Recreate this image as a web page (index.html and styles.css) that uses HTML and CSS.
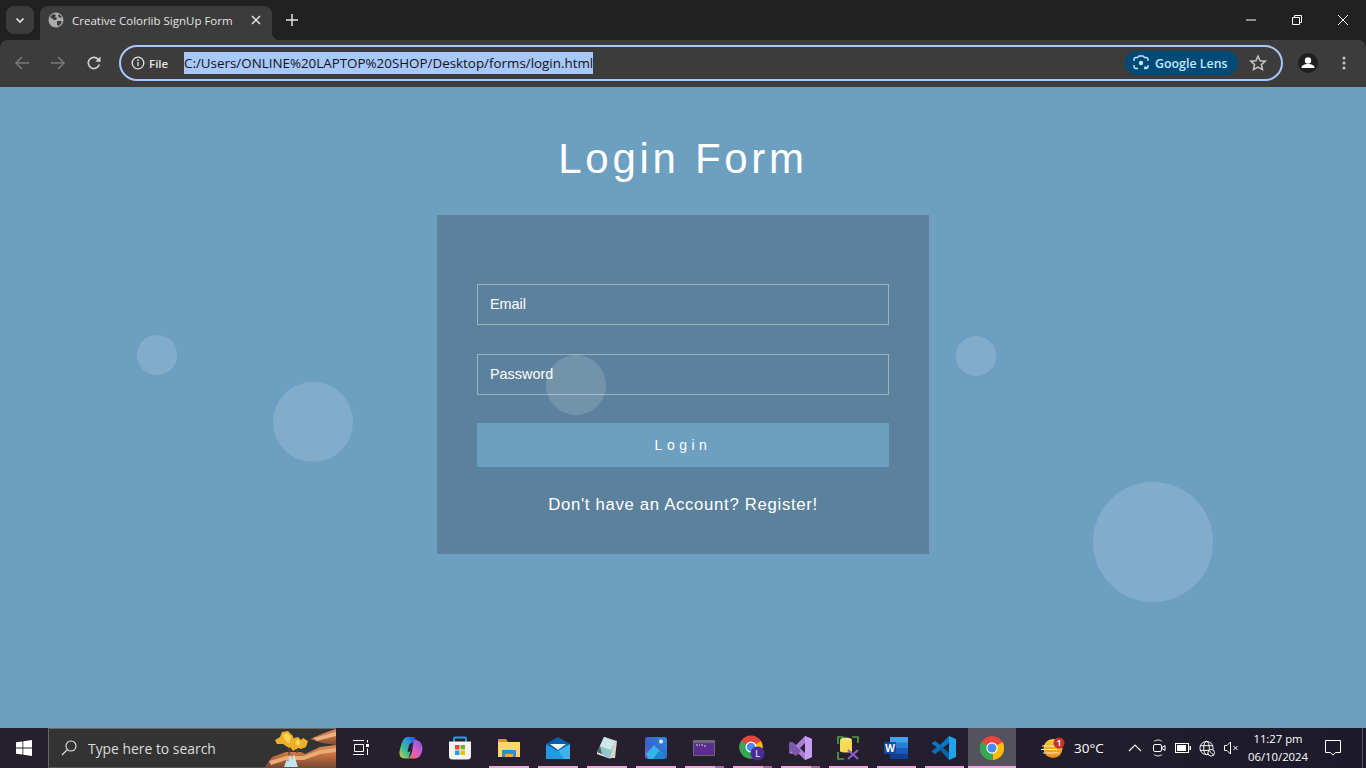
FILE: index.html
```html
<!DOCTYPE html>
<html lang="en">
<head>
    <meta charset="UTF-8">
    <title>Creative Colorlib SignUp Form</title>
    <link rel="stylesheet" href="styles.css">
</head>
<body>
    <!-- browser tabs -->
    <div class="tabstrip">
        <div class="tab-search">
            <svg width="12" height="12" viewBox="0 0 12 12"><path d="M2.5 4.5 6 8l3.5-3.5" fill="none" stroke="#e3e3e3" stroke-width="1.7"/></svg>
        </div>
        <div class="tab">
            <svg class="favicon" width="16" height="16" viewBox="0 0 16 16"><circle cx="8" cy="8" r="7.5" fill="#a9abad"/><path d="M2 5l3-3 3 1-1 2 2 1-1 2H6L3.500 6zM9 9h4l1 1-3 4-2-1zM11 2l3 3-2 1-2-2z" fill="#3c3c3c"/></svg>
            <span class="tab-title">Creative Colorlib SignUp Form</span>
            <svg class="tab-close" width="10" height="10" viewBox="0 0 10 10"><path d="M1 1l8 8M9 1 1 9" stroke="#e3e3e3" stroke-width="1.5"/></svg>
        </div>
        <svg class="new-tab" width="12" height="12" viewBox="0 0 12 12"><path d="M6 0v12M0 6h12" stroke="#e3e3e3" stroke-width="1.5"/></svg>
        <div class="window-controls">
            <svg width="10" height="10" viewBox="0 0 10 10"><path d="M0 5h10" stroke="#fff"/></svg>
            <svg width="10" height="10" viewBox="0 0 10 10"><path d="M.5 2.500h7v7h-7zM2.500 2.500V.5h7v7H7.500" fill="none" stroke="#fff"/></svg>
            <svg width="10" height="10" viewBox="0 0 10 10"><path d="M0 0l10 10M10 0 0 10" stroke="#fff"/></svg>
        </div>
    </div>

    <!-- address bar -->
    <div class="toolbar">
        <svg class="nav-icon" width="16" height="16" viewBox="0 0 16 16"><path d="M15 8H2M8 2 2 8l6 6" fill="none" stroke="#75787a" stroke-width="1.6"/></svg>
        <svg class="nav-icon" width="16" height="16" viewBox="0 0 16 16"><path d="M1 8h13M8 2l6 6-6 6" fill="none" stroke="#75787a" stroke-width="1.6"/></svg>
        <svg class="nav-icon" width="16" height="16" viewBox="0 0 16 16"><path d="M13.300 9.500a5.600 5.600 0 1 1-1.200-5.300L14 6" fill="none" stroke="#d0d2d4" stroke-width="1.600"/><path d="M14.500 1.500v5.200H9.300z" fill="#d0d2d4"/></svg>
        <div class="omnibox">
            <svg width="14" height="14" viewBox="0 0 14 14"><circle cx="7" cy="7" r="5.800" fill="none" stroke="#e3e3e3" stroke-width="1.300"/><path d="M7 6v4" stroke="#e3e3e3" stroke-width="1.300"/><circle cx="7" cy="4.200" r=".9" fill="#e3e3e3"/></svg>
            <span class="scheme">File</span>
            <span class="url">C:/Users/ONLINE%20LAPTOP%20SHOP/Desktop/forms/login.html</span>
            <div class="lens">
                <svg width="16" height="16" viewBox="0 0 16 16"><path d="M1 6V4.500A2 2 0 0 1 3 2.500h1.500L6 1h4l1.500 1.500H13a2 2 0 0 1 2 2V6M15 10v1.500a2 2 0 0 1-2 2h-2M5 13.500H3a2 2 0 0 1-2-2V10" fill="none" stroke="#c2e7ff" stroke-width="1.400"/><circle cx="8" cy="8" r="2.200" fill="#c2e7ff"/><circle cx="12.500" cy="12.500" r="1.200" fill="#c2e7ff"/></svg>
                <span>Google Lens</span>
            </div>
            <svg class="star" width="18" height="18" viewBox="0 0 18 18"><path d="m9 2 2.100 4.700 5.100.5-3.800 3.400 1.100 5L9 13l-4.500 2.600 1.100-5-3.800-3.400 5.100-.5z" fill="none" stroke="#c7c7c7" stroke-width="1.500"/></svg>
        </div>
        <div class="avatar">
            <svg width="20" height="20" viewBox="0 0 20 20"><circle cx="10" cy="10" r="10" fill="#1f1f1f"/><circle cx="10" cy="7.500" r="3.200" fill="#fff"/><path d="M3.500 15c0-3 3-4 6.500-4s6.500 1 6.500 4z" fill="#fff"/></svg>
        </div>
        <svg class="menu-dots" width="4" height="14" viewBox="0 0 4 14"><circle cx="2" cy="2" r="1.500" fill="#c7c7c7"/><circle cx="2" cy="7" r="1.500" fill="#c7c7c7"/><circle cx="2" cy="12" r="1.500" fill="#c7c7c7"/></svg>
    </div>

    <!-- the page itself -->
    <main class="page">
        <h1 class="page-title">Login Form</h1>
        <form class="login-card">
            <input class="field" type="text" placeholder="Email">
            <input class="field" type="password" placeholder="Password">
            <button class="login-btn" type="button">Login</button>
            <p class="register">Don't have an Account? Register!</p>
        </form>
        <span class="bubble bubble-a"></span>
        <span class="bubble bubble-b"></span>
        <span class="bubble bubble-c"></span>
        <span class="bubble bubble-d"></span>
        <span class="bubble bubble-e"></span>
    </main>

    <!-- windows taskbar -->
    <footer class="taskbar">
        <div class="start">
            <svg width="16" height="16" viewBox="0 0 16 16"><path d="M0 2.300 6.500 1.400v6.200H0zM7.300 1.300 16 0v7.600H7.300zM0 8.400h6.500v6.200L0 13.700zM7.300 8.400H16V16l-8.700-1.300z" fill="#fff"/></svg>
        </div>
        <div class="search">
            <svg width="16" height="16" viewBox="0 0 16 16"><circle cx="10" cy="6" r="5" fill="none" stroke="#e6e6e6" stroke-width="1.100"/><path d="M6.300 9.700 1 15" stroke="#e6e6e6" stroke-width="1.200"/></svg>
            <span class="search-text">Type here to search</span>
            <svg class="search-art" width="72" height="38" viewBox="0 0 72 38">
                <defs>
                    <linearGradient id="rock" x1="0" y1="0" x2="0" y2="1"><stop offset="0" stop-color="#d98f5c"/><stop offset=".45" stop-color="#c4713f"/><stop offset="1" stop-color="#7d4a30"/></linearGradient>
                </defs>
                <path d="M1 38 8 28l14-5h15l4 2 15-7 16-2v22z" fill="url(#rock)"/>
                <path d="M5 32l17-5h17l17-6 16-2v4l-16 2-16 6H22L7 36z" fill="#e9ab78"/>
                <path d="M46 10 60 4 72 0v16l-14-2z" fill="url(#rock)"/>
                <path d="M49 9 72 3v4L53 12z" fill="#eab283"/>
                <path d="M20 38l3-8 1 3 2-7 2 5 2-6 2 7 2 6z" fill="#c3e3ee"/>
                <path d="M25 26l1-12M33 24l1-9" stroke="#5c4630" stroke-width="1.300"/>
                <path d="M11 11l5-3 2-5 6-1 5 5 1 8-5 4-6-4-6 0zM26 13l4-4 4-1 3 3 2-2 5 3-2 6-5 2-3-1-5 3-3-4z" fill="#edb128"/>
                <path d="M19 6l4-2 4 4-2 6-4-3zM33 10l3 2-1 5-3-2z" fill="#f9d65b"/>
            </svg>
        </div>
        <div class="task-group">
            <div class="task-item">
                <svg width="18" height="16" viewBox="0 0 18 16"><path d="M0 .5h11M0 14.500h11M1.500 4.500h9v7h-9z" fill="none" stroke="#fff"/><rect x="13" y="4" width="3" height="3" fill="#fff"/><path d="M14.500 0v2.500M14.500 8.500V15" stroke="#fff"/></svg>
            </div>
            <div class="task-item">
                <svg width="24" height="22" viewBox="0 0 24 22">
                    <defs>
                        <linearGradient id="cp-left" x1="0" y1="1" x2="1" y2="0"><stop offset="0" stop-color="#e8c83a"/><stop offset=".35" stop-color="#3fbf92"/><stop offset=".7" stop-color="#2a8ee8"/><stop offset="1" stop-color="#2448c8"/></linearGradient>
                        <linearGradient id="cp-right" x1="0" y1="1" x2="1" y2="0"><stop offset="0" stop-color="#f2703c"/><stop offset=".45" stop-color="#e05cc0"/><stop offset="1" stop-color="#7c58e8"/></linearGradient>
                    </defs>
                    <path d="M8 0h7c1.500 0 1.500 1 1 3l-3 6-3.500 12.500H6C1.500 21.500 0 18 .5 15 1.500 9 4 0 8 0z" fill="url(#cp-left)"/>
                    <path d="M15 3c1.500-.5 3.500 0 5.500 1.500 3 2.500 3.500 7 2.500 10-1 4-3.500 7-7 7H8c2.500 0 4-3.500 5-7z" fill="url(#cp-right)"/>
                    <path d="M10 8.500c1-2.500 2.500-3 4-3l-2 8c-.7 1.500-2.500 1.500-3.500 1z" fill="#251f2e"/>
                </svg>
            </div>
            <div class="task-item">
                <svg width="24" height="24" viewBox="0 0 24 24">
                    <path d="M6 6V2.500a1 1 0 0 1 1-1h10a1 1 0 0 1 1 1V6" fill="none" stroke="#21a8e0" stroke-width="1.800"/>
                    <path d="M1 5.500h22v14.500a3.500 3.500 0 0 1-3.500 3.500h-15A3.500 3.500 0 0 1 1 20z" fill="#f4f4f4"/>
                    <rect x="7" y="9" width="4.500" height="4.500" fill="#e8452c"/><rect x="12.500" y="9" width="4.500" height="4.500" fill="#6fb52c"/>
                    <rect x="7" y="14.500" width="4.500" height="4.500" fill="#1f9fe8"/><rect x="12.500" y="14.500" width="4.500" height="4.500" fill="#f9b90f"/>
                </svg>
            </div>
            <div class="task-item pinned">
                <svg width="22" height="18" viewBox="0 0 22 18">
                    <path d="M0 0h8l2 3h12v3H0z" fill="#d59a1a"/>
                    <path d="M0 3h22v15H0z" fill="#ffd667"/>
                    <path d="M4 18v-7h14v7h-3v-3H7v3z" fill="#2a8fd8"/>
                    <rect x="7" y="15" width="8" height="3" fill="#f0ac2c"/>
                </svg>
            </div>
            <div class="task-item pinned">
                <svg width="24" height="22" viewBox="0 0 24 22">
                    <path d="M12 0 24 7 12 14 0 7z" fill="#0a5fad"/>
                    <path d="M4 7h16l-8 6z" fill="#f1f5f8"/>
                    <path d="M0 7l12 7 12-7v15H0z" fill="#1f9be3"/>
                    <path d="M12 14l12-7v15H18z" fill="#3fb2ee"/>
                </svg>
            </div>
            <div class="task-item pinned">
                <svg width="22" height="24" viewBox="0 0 22 24">
                    <path d="M8 1l13 4-2 17-6 0z" fill="#d9d4bf"/>
                    <path d="M8 1l11 4-5 17L1 16z" fill="#8fc6cc"/>
                    <path d="M8 1l11 4-4 9L4 10z" fill="#cde6e6"/>
                    <path d="M1 16l13 6 1 1-14-5z" fill="#f4f4f4"/>
                    <path d="M1 16l3-6 2 8z" fill="#4a6468"/>
                </svg>
            </div>
            <div class="task-item pinned">
                <svg width="22" height="22" viewBox="0 0 22 22">
                    <defs>
                        <linearGradient id="photo-bg" x1="1" y1="0" x2="0" y2="1"><stop offset="0" stop-color="#2a8be0"/><stop offset=".6" stop-color="#3a62c8"/><stop offset="1" stop-color="#8a5ad0"/></linearGradient>
                    </defs>
                    <rect width="22" height="22" rx="3" fill="url(#photo-bg)"/>
                    <path d="M1 17 9 8l9 9-4 5H4z" fill="#35b3ee"/>
                    <path d="M8 22l6-8 7 6-2 2z" fill="#1d84d2"/>
                    <circle cx="16" cy="4.500" r="2" fill="#eef4fb"/>
                </svg>
            </div>
        </div>
        <div class="task-group narrow">
            <div class="task-item pinned stacked">
                <svg width="22" height="16" viewBox="0 0 22 16"><rect width="22" height="16" rx="1" fill="#6a6a74"/><rect x="1" y="3" width="20" height="12" fill="#5c2d91"/><path d="M3 5h2M6 5h1M8 5h2M11 6h2" stroke="#d8d0e8"/></svg>
            </div>
            <div class="task-item pinned stacked">
                <svg width="26" height="26" viewBox="0 0 26 26">
                    <circle cx="12" cy="12" r="11.500" fill="#e8453c"/>
                    <path d="M12 12 22 6a11.500 11.500 0 0 1-9 17.500z" fill="#fbbc05"/>
                    <path d="M12 12 2 6a11.500 11.500 0 0 0 11 17.500z" fill="#34a853"/>
                    <circle cx="12" cy="12" r="5.500" fill="#fff"/><circle cx="12" cy="12" r="4.300" fill="#4a8bf5"/>
                    <circle cx="18.500" cy="18.500" r="7" fill="#4a2a9c"/>
                    <text class="badge-l" x="18.500" y="21.800" text-anchor="middle">L</text>
                </svg>
            </div>
            <div class="task-item pinned stacked">
                <svg width="24" height="24" viewBox="0 0 24 24">
                    <path d="M17 0 24 3v18l-7 3-9-9-4 3-3-1V7l3-1 4 3zM17 7l-5 5 5 5z" fill="#a97ed8"/>
                    <path d="M17 0 24 3v18l-7 3z" fill="#c79df0"/>
                    <path d="M1 7l3-1 9 9-5 5-3-2zM1 17V7l3 2v6z" fill="#7d59ab"/>
                </svg>
            </div>
            <div class="task-item pinned">
                <svg width="24" height="24" viewBox="0 0 24 24">
                    <path d="M2 8V1h6M16 1h6v6M2 16v7h6" fill="none" stroke="#4ba33f" stroke-width="1.700"/>
                    <ellipse cx="10" cy="4" rx="6" ry="2.500" fill="#f7e27a"/>
                    <path d="M4 4v11c0 2 12 2 12 0V4c0 2-12 2-12 0z" fill="#f5d94e"/>
                    <path d="M12 14l10 9M22 14l-10 9" stroke="#8c5fc7" stroke-width="2"/>
                </svg>
            </div>
            <div class="task-item pinned">
                <svg width="24" height="22" viewBox="0 0 24 22">
                    <rect x="6" y="0" width="18" height="22" rx="1" fill="#2b7cd3"/>
                    <rect x="6" y="0" width="18" height="5.500" fill="#41a5ee"/>
                    <rect x="6" y="11" width="18" height="5.500" fill="#185abd"/>
                    <rect x="6" y="16.500" width="18" height="5.500" fill="#103f91"/>
                    <rect x="0" y="5" width="12" height="12" rx="1" fill="#15499f"/>
                    <text class="badge-w" x="6" y="14.500" text-anchor="middle">W</text>
                </svg>
            </div>
            <div class="task-item pinned">
                <svg width="24" height="24" viewBox="0 0 24 24">
                    <path d="M17 0 24 3v18l-7 3V7z" fill="#1fa3ea"/>
                    <path d="M17 0v7L8 14l-5 4-3-2v-1l5-4L0 8V7l3-2 5 4z" fill="#0a78c5"/>
                    <path d="M17 24v-7l-9-8 0 5 9 10z" fill="#0a64a8"/>
                    <path d="M8 14l-5 4-3-2 5-5z" fill="#0e6cb0"/>
                </svg>
            </div>
            <div class="task-item pinned active">
                <svg width="24" height="24" viewBox="0 0 24 24">
                    <circle cx="12" cy="12" r="12" fill="#e8453c"/>
                    <path d="M12 12 22.500 6A12 12 0 0 1 13 24z" fill="#fbbc05"/>
                    <path d="M12 12 1.500 6A12 12 0 0 0 13 24z" fill="#34a853"/>
                    <circle cx="12" cy="12" r="5.700" fill="#fff"/><circle cx="12" cy="12" r="4.500" fill="#4a8bf5"/>
                </svg>
            </div>
        </div>
        <div class="tray">
            <div class="weather">
                <svg width="24" height="22" viewBox="0 0 24 22">
                    <defs>
                        <linearGradient id="sun" x1="0" y1="0" x2="0" y2="1"><stop offset="0" stop-color="#f9cf3a"/><stop offset="1" stop-color="#ee8a1e"/></linearGradient>
                    </defs>
                    <circle cx="12" cy="11.500" r="9.500" fill="url(#sun)"/>
                    <path d="M1 9h14M0 12.500h16M2 16h16" stroke="#fdeab8" stroke-width="1.200"/>
                    <circle cx="18" cy="6" r="5.500" fill="#c4322b"/>
                    <text class="badge-1" x="18" y="9">1</text>
                </svg>
                <span class="temp">30°C</span>
            </div>
            <svg class="tray-icon" width="14" height="8" viewBox="0 0 14 8"><path d="M1 7l6-6 6 6" fill="none" stroke="#fff" stroke-width="1.100"/></svg>
            <svg class="tray-icon" width="16" height="18" viewBox="0 0 16 18"><path d="M3 2.500C5 .5 9 .5 11 2.500M3 15.500c2 2 6 2 8 0" fill="none" stroke="#ddd"/><rect x="2.500" y="5.500" width="8" height="7" rx="1.500" fill="none" stroke="#fff"/><path d="M11 8.500l3-2v5l-3-2" fill="none" stroke="#fff"/></svg>
            <svg class="tray-icon" width="16" height="10" viewBox="0 0 16 10"><rect x=".5" y=".5" width="13" height="9" fill="none" stroke="#fff"/><rect x="2" y="2" width="9" height="6" fill="#fff"/><rect x="14.500" y="3" width="1.500" height="4" fill="#fff"/></svg>
            <svg class="tray-icon" width="17" height="17" viewBox="0 0 17 17"><circle cx="8" cy="8" r="7" fill="none" stroke="#fff"/><ellipse cx="8" cy="8" rx="3" ry="7" fill="none" stroke="#fff"/><path d="M1 5.500h14M1 10.500h14" stroke="#fff"/><circle cx="13" cy="13" r="3.500" fill="#1c1a28" stroke="#fff"/><path d="M10.500 10.500l5 5" stroke="#fff"/></svg>
            <svg class="tray-icon" width="15" height="14" viewBox="0 0 15 14"><path d="M1 4.500h2.500L7 1v12L3.500 9.500H1z" fill="none" stroke="#fff"/><path d="M10 5l4 4M14 5l-4 4" stroke="#fff"/></svg>
            <div class="clock">
                <span>11:27 pm</span>
                <span>06/10/2024</span>
            </div>
            <svg class="notify" width="16" height="16" viewBox="0 0 16 16"><path d="M.5 .5h15v12h-5L8 15.200 5.500 12.500h-5z" fill="none" stroke="#fff"/></svg>
            <span class="show-desktop"></span>
        </div>
    </footer>
</body>
</html>
```

FILE: styles.css
```css
* {
    box-sizing: border-box;
}
body {
    margin: 0;
    height: 768px;
    overflow: hidden;
    display: flex;
    flex-direction: column;
    font-family: "Liberation Sans", Arial, sans-serif;
    background-color: #202120;
}

/* browser tabs */
.tabstrip {
    height: 40px;
    flex: none;
    display: flex;
    align-items: flex-start;
    padding: 6px 0 0 6px;
}
.tab-search {
    width: 28px;
    height: 28px;
    border-radius: 8px;
    background-color: #3c3c3c;
    display: flex;
    align-items: center;
    justify-content: center;
}
.tab {
    position: relative;
    width: 232px;
    height: 34px;
    margin-left: 6px;
    padding: 0 11px 6px 8px;
    background-color: #3c3c3c;
    border-radius: 8px 8px 0 0;
    display: flex;
    align-items: center;
}
.tab::after {
    content: "";
    position: absolute;
    right: -8px;
    bottom: 0;
    width: 8px;
    height: 8px;
    background: radial-gradient(circle at 100% 0, transparent 8px, #3c3c3c 8.5px);
}
.tab-title {
    flex: 1;
    margin-left: 8px;
    font-family: "Open Sans", sans-serif;
    font-size: 11.5px;
    color: #e3e3e3;
    white-space: nowrap;
}
.new-tab {
    margin: 8px 0 0 14px;
}
.window-controls {
    margin-left: auto;
    width: 138px;
    height: 28px;
    display: flex;
    align-items: center;
    justify-content: space-around;
}

/* address bar */
.toolbar {
    height: 47px;
    flex: none;
    display: flex;
    align-items: center;
    padding: 0 20px 1px 14px;
    background-color: #3c3c3c;
    border-radius: 8px 8px 0 0;
}
.nav-icon {
    margin-right: 20px;
}
.nav-icon:nth-child(3) {
    margin-right: 17px;
}
.omnibox {
    flex: none;
    width: 1164px;
    height: 36px;
    border: 2px solid #a8c7fa;
    border-radius: 18px;
    display: flex;
    align-items: center;
    padding: 0 14px 0 10px;
}
.scheme {
    margin-left: 4px;
    width: 35px;
    font-family: "Open Sans", sans-serif;
    font-size: 11.5px;
    font-weight: 600;
    color: #e3e3e3;
}
.url {
    height: 22px;
    line-height: 22px;
    background-color: #a8c7fa;
    color: #101318;
    font-family: "Open Sans", sans-serif;
    font-size: 13.38px;
    white-space: nowrap;
}
.lens {
    margin-left: auto;
    width: 113px;
    height: 24px;
    border-radius: 12px;
    background-color: #004a77;
    color: #c2e7ff;
    font-family: "Open Sans", sans-serif;
    font-size: 12.4px;
    font-weight: 600;
    display: flex;
    align-items: center;
    gap: 6px;
    padding-left: 8px;
    white-space: nowrap;
}
.star {
    margin-left: 11px;
}
.avatar {
    margin-left: 15px;
    height: 20px;
}
.menu-dots {
    margin-left: 24px;
}

/* login page */
.page {
    position: relative;
    flex: 1;
    overflow: hidden;
    background-color: #6d9fc1;
    display: flex;
    flex-direction: column;
    align-items: center;
}
.page-title {
    margin: 48px 0 0;
    height: 80px;
    font-size: 42px;
    line-height: 48px;
    font-weight: 400;
    letter-spacing: 3.7px;
    color: #fff;
}
.login-card {
    width: 492px;
    height: 339px;
    padding: 69px 40px 0;
    background-color: #5b819c;
    display: flex;
    flex-direction: column;
}
.field {
    height: 41px;
    margin-bottom: 29px;
    padding: 0 12px 2px;
    border: 1px solid rgba(255, 255, 255, 0.4);
    background: transparent;
    font-family: "Liberation Sans", Arial, sans-serif;
    font-size: 14.4px;
    color: #fff;
}
.field::placeholder {
    color: #fff;
    opacity: 1;
}
.login-btn {
    height: 44px;
    margin-top: -1px;
    border: 0;
    background-color: #6d9fc1;
    font-family: "Liberation Sans", Arial, sans-serif;
    font-size: 14px;
    letter-spacing: 4.5px;
    color: #fff;
}
.register {
    margin: 28px 0 0;
    text-align: center;
    font-size: 16.8px;
    line-height: 20px;
    letter-spacing: 0.66px;
    color: #fff;
}
.bubble {
    position: absolute;
    border-radius: 50%;
    background-color: rgba(255, 255, 255, 0.15);
}
.bubble-a { left: 137px; top: 248px; width: 40px; height: 40px; }
.bubble-b { left: 273px; top: 295px; width: 80px; height: 80px; }
.bubble-c { left: 546px; top: 268px; width: 60px; height: 60px; }
.bubble-d { left: 956px; top: 249px; width: 40px; height: 40px; }
.bubble-e { left: 1093px; top: 395px; width: 120px; height: 120px; }

/* taskbar */
.taskbar {
    height: 40px;
    flex: none;
    display: flex;
    background: linear-gradient(90deg, #261f2e, #251f2e 60%, #1c1b2b);
    color: #fff;
    font-family: "Open Sans", sans-serif;
}
.start {
    flex: none;
    width: 48px;
    display: flex;
    align-items: center;
    justify-content: center;
}
.search {
    flex: none;
    width: 288px;
    height: 40px;
    padding-left: 12px;
    background-color: #333;
    border: 1px solid #666;
    border-width: 1px 0 1px 1px;
    border-bottom-color: #555;
    display: flex;
    align-items: center;
    overflow: hidden;
}
.search-text {
    margin-left: 11px;
    font-size: 13.9px;
    color: #dcdcdc;
    white-space: nowrap;
}
.search-art {
    margin-left: auto;
}
.task-group {
    flex: none;
    display: flex;
    margin-left: 1px;
}
.task-group.narrow {
    margin-left: 0;
}
.task-item {
    position: relative;
    width: 49px;
    height: 40px;
    display: flex;
    align-items: center;
    justify-content: center;
}
.narrow .task-item {
    width: 48px;
}
.pinned::after {
    content: "";
    position: absolute;
    left: 5px;
    right: 4px;
    bottom: 0;
    height: 2px;
    background-color: #f4a4dc;
}
.stacked::before {
    content: "";
    position: absolute;
    left: 5px;
    right: 4px;
    bottom: 0;
    height: 2px;
    background-color: #a86f9c;
}
.stacked::after {
    right: 13px;
}
.active {
    background-color: #54525c;
}
.active::after {
    left: 0;
    right: 0;
}
.badge-l {
    font-size: 9px;
    fill: #fff;
}
.badge-w {
    font-size: 10px;
    font-weight: 700;
    fill: #fff;
}
.badge-1 {
    font-size: 8px;
    font-weight: 700;
    fill: #fff;
    text-anchor: middle;
}
.tray {
    flex: 1;
    display: flex;
    align-items: center;
    padding-left: 25px;
}
.weather {
    flex: none;
    display: flex;
    align-items: center;
    width: 78px;
}
.temp {
    margin-left: 9px;
    font-size: 13.5px;
}
.tray-icon {
    flex: none;
    margin-left: 8px;
    width: 16px;
}
.clock {
    flex: none;
    margin-left: 5px;
    width: 68px;
    display: flex;
    flex-direction: column;
    align-items: center;
    font-size: 11.3px;
    line-height: 18px;
    white-space: nowrap;
}
.notify {
    flex: none;
    margin-left: 13px;
}
.show-desktop {
    margin-left: auto;
    width: 1px;
    height: 100%;
    margin-right: 3px;
    background-color: #555;
}
```
